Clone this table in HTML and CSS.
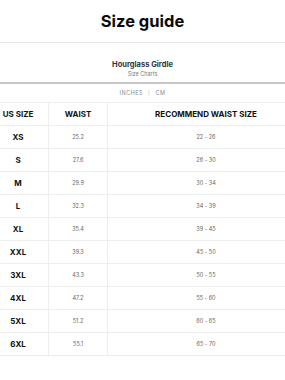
FILE: index.html
```html
<!DOCTYPE html>
<html>
<head>
<meta charset="utf-8">
<link rel="stylesheet" href="styles.css">
</head>
<body>
<header class="top">
  <h1 class="title">Size guide</h1>
</header>
<section class="product">
  <div class="product-name">Hourglass Girdle</div>
  <div class="product-sub">Size Charts</div>
</section>
<div class="units">INCHES <span class="sep">|</span> CM</div>
<div class="table-wrap">
  <table class="chart">
    <thead>
      <tr><th class="c1">US SIZE</th><th class="c2">WAIST</th><th class="c3">RECOMMEND WAIST SIZE</th></tr>
    </thead>
    <tbody>
      <tr><td class="c1">XS</td><td class="c2">25.2</td><td class="c3">22 - 26</td></tr>
      <tr><td class="c1">S</td><td class="c2">27.6</td><td class="c3">26 - 30</td></tr>
      <tr><td class="c1">M</td><td class="c2">29.9</td><td class="c3">30 - 34</td></tr>
      <tr><td class="c1">L</td><td class="c2">32.3</td><td class="c3">34 - 39</td></tr>
      <tr><td class="c1">XL</td><td class="c2">35.4</td><td class="c3">39 - 45</td></tr>
      <tr><td class="c1">XXL</td><td class="c2">39.3</td><td class="c3">45 - 50</td></tr>
      <tr><td class="c1">3XL</td><td class="c2">43.3</td><td class="c3">50 - 55</td></tr>
      <tr><td class="c1">4XL</td><td class="c2">47.2</td><td class="c3">55 - 60</td></tr>
      <tr><td class="c1">5XL</td><td class="c2">51.2</td><td class="c3">60 - 65</td></tr>
      <tr><td class="c1">6XL</td><td class="c2">55.1</td><td class="c3">65 - 70</td></tr>
    </tbody>
  </table>
</div>
</body>
</html>
```
FILE: styles.css
```css
html, body {
  margin: 0;
  padding: 0;
  background: #fff;
}
body {
  font-family: Inter, "Liberation Sans", Arial, sans-serif;
  color: #111;
  width: 285px;
  overflow: hidden;
}
.top {
  height: 42px;
  border-bottom: 1px solid #e6e6e6;
  display: flex;
  align-items: center;
  justify-content: center;
}
.title {
  margin: 0;
  font-size: 16.5px;
  font-weight: 700;
  letter-spacing: 0;
  color: #0a0a0a;
}
.product {
  height: 41px;
  box-sizing: border-box;
  border-bottom: 2px solid #c8c8c8;
  display: flex;
  flex-direction: column;
  align-items: center;
  padding-top: 17px;
}
.product-name {
  font-size: 7.5px;
  line-height: 10px;
  font-weight: 700;
  color: #333;
}
.product-sub {
  font-size: 5.5px;
  line-height: 8px;
  color: #777;
}
.units {
  height: 18px;
  display: flex;
  align-items: center;
  justify-content: center;
  font-size: 5.5px;
  letter-spacing: 0.5px;
  color: #8a8a8a;
  gap: 3px;
}
.sep {
  color: #bbb;
  padding: 0 2px;
}
.table-wrap {
  width: 285px;
  overflow: hidden;
}
.chart {
  width: 314px;
  margin-left: -13px;
  border-collapse: collapse;
  table-layout: fixed;
}
.chart th, .chart td {
  border: 1px solid #eeeeee;
  height: 22px;
  padding: 0;
  text-align: center;
  vertical-align: middle;
}
.chart th {
  font-size: 8px;
  font-weight: 700;
  color: #111;
}
.chart td.c1 {
  font-size: 8px;
  font-weight: 700;
  color: #111;
}
.chart td.c2, .chart td.c3 {
  font-size: 5.5px;
  color: #666;
}
.c1 { width: 60px; }
.c2 { width: 58px; }
.c3 { width: 196px; }
```
